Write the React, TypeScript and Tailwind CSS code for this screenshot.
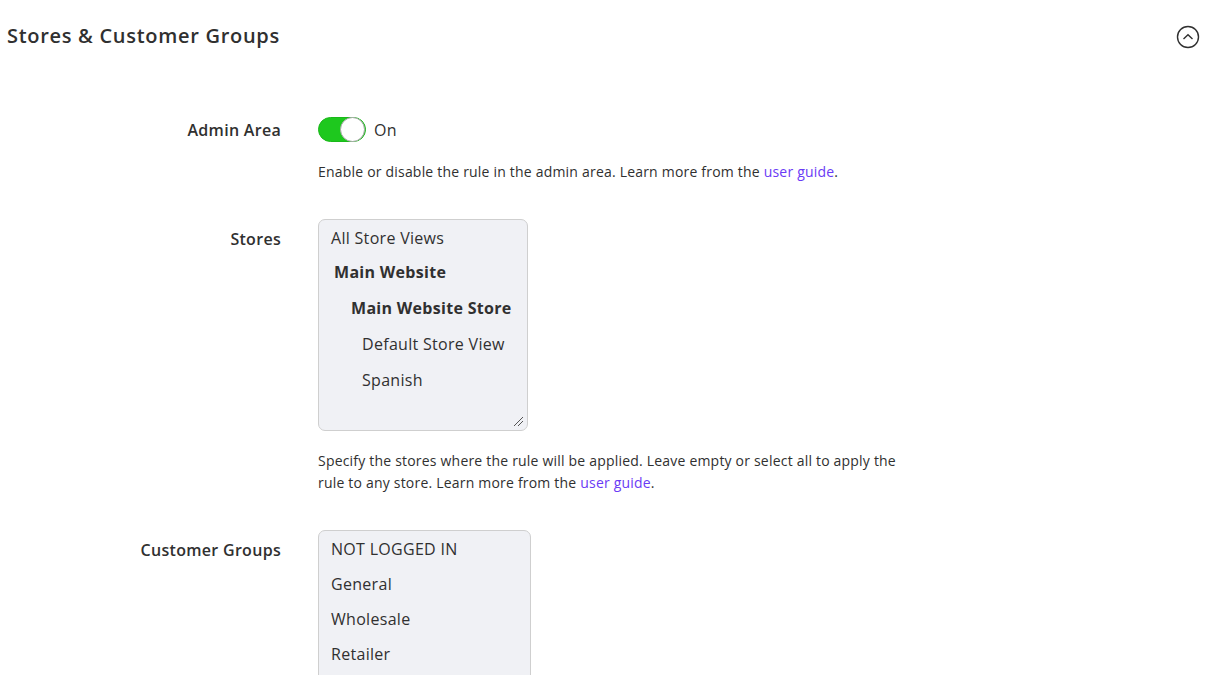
import React from "react";

const Resize = () => (
  <svg width="12" height="12" viewBox="0 0 12 12" className="absolute right-[3px] bottom-[3px]">
    <line x1="2" y1="11" x2="11" y2="2" stroke="#555" strokeWidth="1" />
    <line x1="6" y1="11" x2="11" y2="6" stroke="#555" strokeWidth="1" />
  </svg>
);

export default function App() {
  return (
    <div className="h-[675px] w-full overflow-hidden bg-white text-[#303030]" style={{ fontFamily: "'Open Sans', sans-serif" }}>
      <div className="flex items-center justify-between pl-[7px] pr-[23px] pt-[22px]">
        <h2 className="text-[20px] font-semibold leading-[28px] tracking-[0.035em] text-[#303030]">Stores &amp; Customer Groups</h2>
        <svg width="24" height="24" viewBox="0 0 24 24" className="mt-[2px]">
          <circle cx="12" cy="12" r="10.5" fill="none" stroke="#303030" strokeWidth="1.4" />
          <path d="M7.5 14 L12 9.8 L16.5 14" fill="none" stroke="#303030" strokeWidth="1.4" />
        </svg>
      </div>

      <div className="mt-[55px] flex flex-col">
        {/* Admin Area */}
        <div className="flex">
          <div className="w-[281px] shrink-0 pt-[13px] text-right text-[16px] font-semibold leading-[24px] tracking-[0.3px]">Admin Area</div>
          <div className="ml-[37px]">
            <div className="mt-[12px] flex items-center gap-[8px]">
              <div className="relative h-[25px] w-[48px] rounded-full bg-[#1ec81e] border border-[#1ab81a]">
                <div className="absolute right-0 top-[-1px] h-[25px] w-[25px] rounded-full border border-[#a8a8a8] bg-white" />
              </div>
              <span className="text-[16px] leading-[24px] tracking-[0.3px] text-[#303030]">On</span>
            </div>
            <p className="mt-[19px] text-[14px] leading-[22px] tracking-[0.2px] text-[#303030]">
              Enable or disable the rule in the admin area. Learn more from the{" "}
              <span className="text-[#6a3bf5]">user guide</span>.
            </p>
          </div>
        </div>

        {/* Stores */}
        <div className="mt-[36px] flex">
          <div className="w-[281px] shrink-0 pt-[8px] text-right text-[16px] font-semibold leading-[24px] tracking-[0.3px]">Stores</div>
          <div className="ml-[37px]">
            <div className="relative h-[212px] w-[210px] rounded-[7px] border border-[#cfcfcf] bg-[#f0f1f5] pt-[5px] text-[16px] tracking-[0.3px] text-[#303030]">
              <div className="h-[36px] pl-[12px] leading-[26px]">All Store Views</div>
              <div className="h-[36px] pl-[15px] font-bold leading-[22px]">Main Website</div>
              <div className="h-[36px] pl-[32px] font-bold leading-[22px]">Main Website Store</div>
              <div className="h-[36px] pl-[43px] leading-[22px]">Default Store View</div>
              <div className="h-[36px] pl-[43px] leading-[22px]">Spanish</div>
              <Resize />
            </div>
            <p className="mt-[19px] w-[582px] text-[14px] leading-[22px] tracking-[0.2px] text-[#303030]">
              Specify the stores where the rule will be applied. Leave empty or select all to apply the rule to any store. Learn more from the{" "}
              <span className="text-[#6a3bf5]">user guide</span>.
            </p>
          </div>
        </div>

        {/* Customer Groups */}
        <div className="mt-[36px] flex">
          <div className="w-[281px] shrink-0 pt-[8px] text-right text-[16px] font-semibold leading-[24px] tracking-[0.3px]">Customer Groups</div>
          <div className="ml-[37px]">
            <div className="relative h-[220px] w-[213px] rounded-t-[7px] border border-[#cfcfcf] bg-[#f0f1f5] pt-[5px] text-[16px] tracking-[0.3px] text-[#303030]">
              <div className="h-[35px] pl-[12px] leading-[26px]">NOT LOGGED IN</div>
              <div className="h-[35px] pl-[12px] leading-[26px]">General</div>
              <div className="h-[35px] pl-[12px] leading-[26px]">Wholesale</div>
              <div className="h-[35px] pl-[12px] leading-[26px]">Retailer</div>
            </div>
          </div>
        </div>
      </div>
    </div>
  );
}
